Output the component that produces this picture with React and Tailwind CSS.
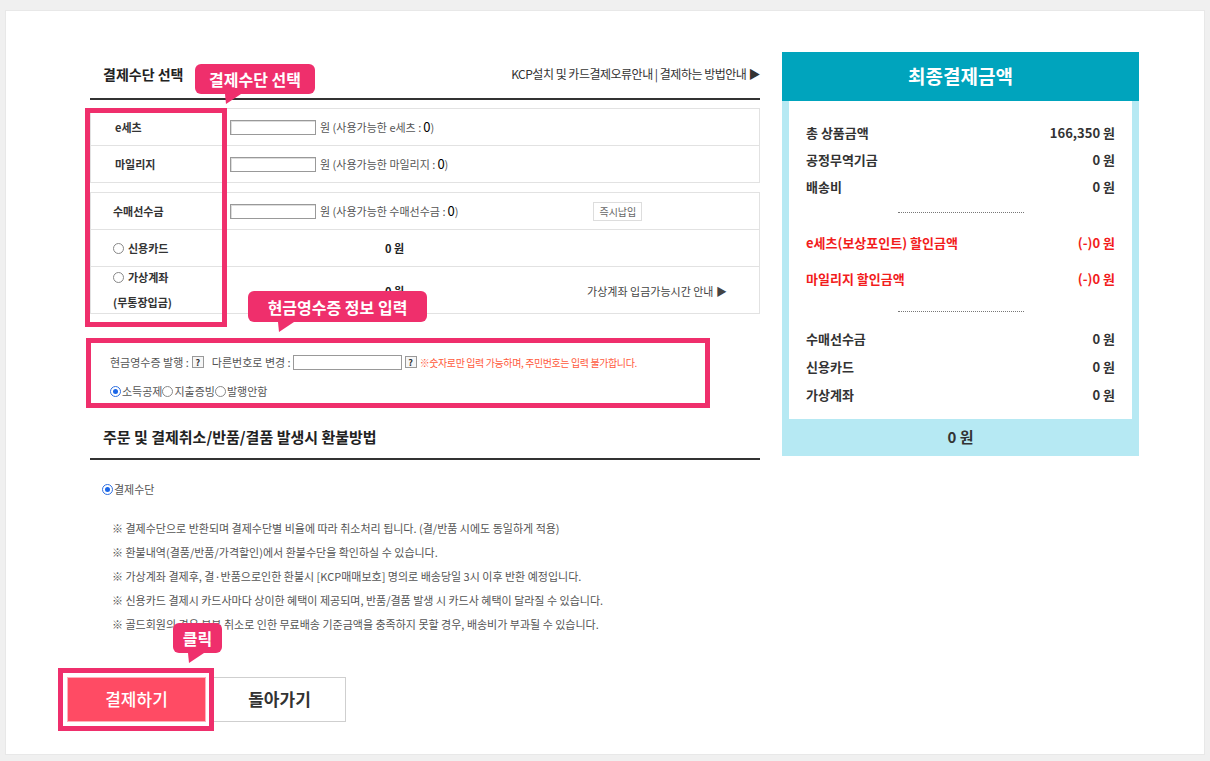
import React from 'react';

const PINK = 'bg-[#ef2f6c]';

const Callout = ({ text, className, tailLeft }) => (
  <div className={`absolute ${PINK} rounded-[6px] flex items-center justify-center text-white font-bold text-[16px] leading-none ${className}`}>
    {text}
    <svg className="absolute top-full" style={{ left: tailLeft }} width="16" height="10" viewBox="0 0 16 10">
      <polygon points="0,0 16,0 1,10" fill="#ef2f6c" />
    </svg>
  </div>
);

const Radio = ({ checked }) => (
  <span className={`inline-block w-[11px] h-[11px] rounded-full border ${checked ? 'border-[#2f6fe0] bg-white p-[2px]' : 'border-[#888] bg-white'} mr-[1px] align-middle`}>
    {checked && <span className="block w-full h-full rounded-full bg-[#1a66e8]" />}
  </span>
);

const Help = () => (
  <span className="inline-flex items-center justify-center w-[12px] h-[12px] border border-[#999] bg-[#f6f6f6] text-[9px] font-bold text-[#333] leading-none">?</span>
);

const PointRow = ({ label, note }) => (
  <div className="h-[37px] flex items-center border-b border-[#e2e2e2]">
    <div className="w-[139px] pl-[24px] text-[11px] font-bold text-[#333]">{label}</div>
    <div className="w-[86px] h-[15px] border border-[#999] bg-white shadow-[inset_1px_1px_0_#ddd]" />
    <div className="ml-[4px] text-[11px] text-[#555] flex items-center">
      원 (사용가능한 {note} : <span className="text-[13px] text-black ml-[2px]">0</span>)
    </div>
  </div>
);

const SumRow = ({ label, value, red, h }) => (
  <div className={`flex items-center justify-between ${h} text-[13px] font-semibold ${red ? 'text-[#f21c1c]' : 'text-[#333]'}`}>
    <span>{label}</span>
    <span>{value}</span>
  </div>
);

const notes = [
  '※ 결제수단으로 반환되며 결제수단별 비율에 따라 취소처리 됩니다. (결/반품 시에도 동일하게 적용)',
  '※ 환불내역(결품/반품/가격할인)에서 환불수단을 확인하실 수 있습니다.',
  '※ 가상계좌 결제후, 결·반품으로인한 환불시 [KCP매매보호] 명의로 배송당일 3시 이후 반환 예정입니다.',
  '※ 신용카드 결제시 카드사마다 상이한 혜택이 제공되며, 반품/결품 발생 시 카드사 혜택이 달라질 수 있습니다.',
  '※ 골드회원의 경우 부분 취소로 인한 무료배송 기준금액을 충족하지 못할 경우, 배송비가 부과될 수 있습니다.',
];

export default function App() {
  return (
    <div className="min-h-screen bg-[#f0f0f0] px-[5px] pt-[10px] pb-[6px] font-['Noto_Sans_CJK_KR','Noto_Sans',sans-serif]">
      <div className="bg-white border border-[#e8e8e8] h-[745px] flex pl-[84px] pt-[41px] gap-[22px]">
        {/* Left column */}
        <div className="relative w-[670px]">
          <div className="h-[48px] flex items-center justify-between border-b-2 border-[#333] pb-[2px]">
            <h2 className="pl-[13px] text-[14px] font-bold text-[#222]">결제수단 선택</h2>
            <span className="text-[12px] text-[#333] tracking-[-0.5px]">KCP설치 및 카드결제오류안내 | 결제하는 방법안내 ▶</span>
          </div>

          <div className="mt-[8px] border border-[#e2e2e2] border-b-0">
            <PointRow label="e세츠" note="e세츠" />
            <PointRow label="마일리지" note="마일리지" />
          </div>

          <div className="mt-[9px] border border-[#e2e2e2] border-b-0">
            <div className="h-[37px] flex items-center border-b border-[#e2e2e2]">
              <div className="w-[139px] pl-[22px] text-[11px] font-bold text-[#333]">수매선수금</div>
              <div className="w-[86px] h-[15px] border border-[#999] bg-white shadow-[inset_1px_1px_0_#ddd]" />
              <div className="ml-[4px] text-[11px] text-[#555] flex items-center">
                원 (사용가능한 수매선수금 : <span className="text-[13px] text-black ml-[2px]">0</span>)
              </div>
              <button className="ml-[135px] h-[19px] px-[5px] border border-[#ddd] bg-white text-[10px] text-[#666]">즉시납입</button>
            </div>
            <div className="h-[37px] flex items-center border-b border-[#e2e2e2]">
              <div className="w-[294px] pl-[22px] text-[11px] font-bold text-[#333] flex items-center gap-[3px]">
                <Radio /> 신용카드
              </div>
              <span className="text-[11px] font-bold text-[#222]">0 원</span>
            </div>
            <div className="h-[47px] flex items-center border-b border-[#e2e2e2]">
              <div className="w-[294px] pl-[22px] text-[11px] font-bold text-[#333] leading-[25px]">
                <div className="flex items-center gap-[3px]"><Radio /> 가상계좌</div>
                <div>(무통장입금)</div>
              </div>
              <span className="text-[11px] font-bold text-[#222] pt-[2px]">0 원</span>
              <span className="ml-[183px] text-[11px] text-[#444] pt-[2px]">가상계좌 입금가능시간 안내 ▶</span>
            </div>
          </div>

          <div className="mt-[24px] h-[70px] pl-[20px] pt-[16px] text-[11px] text-[#555]">
            <div className="flex items-center h-[16px] gap-[3px]">
              <span>현금영수증 발행 :</span>
              <Help />
              <span className="ml-[5px]">다른번호로 변경 :</span>
              <span className="w-[109px] h-[15px] border border-[#999] bg-white -ml-[1px]" />
              <Help />
              <span className="text-[10px] text-[#ff5a3c] tracking-[-0.4px]">※숫자로만 입력 가능하며, 주민번호는 입력 불가합니다.</span>
            </div>
            <div className="flex items-center h-[16px] mt-[13px]">
              <Radio checked />소득공제<Radio />지출증빙<Radio />발행안함
            </div>
          </div>

          <div className="mt-[13px] h-[39px] flex items-center pb-[4px] border-b-2 border-[#333]">
            <h2 className="pl-[13px] text-[15px] font-bold text-[#222]">주문 및 결제취소/반품/결품 발생시 환불방법</h2>
          </div>

          <div className="mt-[21px] pl-[12px] flex items-center text-[11px] text-[#555]">
            <Radio checked />결제수단
          </div>

          <ul className="mt-[19px] pl-[22px] text-[11px] text-[#555]">
            {notes.map((n) => (
              <li key={n} className="h-[24px] flex items-center">{n}</li>
            ))}
          </ul>

          <div className="mt-[40px] flex gap-[7px] ml-[-23px]">
            <button className="w-[139px] h-[45px] bg-[#ff4b64] border border-[#ffb0bc] text-white text-[17px] font-medium">결제하기</button>
            <button className="w-[133px] h-[45px] bg-white border border-[#cfcfcf] text-[#333] text-[17px] font-semibold">돌아가기</button>
          </div>

          {/* Annotations */}
          <div className="absolute left-[-5px] top-[56px] w-[142px] h-[219px] border-[5px] border-[#ef2f6c] pointer-events-none" />
          <div className="absolute left-[-4px] top-[286px] w-[624px] h-[70px] border-[5px] border-[#ef2f6c] pointer-events-none" />
          <div className="absolute left-[-32px] top-[616px] w-[156px] h-[63px] border-[5px] border-[#ef2f6c] pointer-events-none" />
          <Callout text="결제수단 선택" className="left-[105px] top-[12px] w-[120px] h-[30px]" tailLeft={30} />
          <Callout text="현금영수증 정보 입력" className="left-[158px] top-[239px] w-[179px] h-[31px]" tailLeft={30} />
          <Callout text="클릭" className="left-[83px] top-[571px] w-[49px] h-[30px]" tailLeft={15} />
        </div>

        {/* Right column */}
        <div className="w-[357px] self-start">
          <div className="h-[49px] bg-[#00a4bd] flex items-center justify-center text-white text-[19px] font-bold">최종결제금액</div>
          <div className="h-[318px] bg-white border-x-[7px] border-[#b6e9f3] px-[17px] pt-[18px]">
            <SumRow label="총 상품금액" value="166,350 원" h="h-[27px]" />
            <SumRow label="공정무역기금" value="0 원" h="h-[27px]" />
            <SumRow label="배송비" value="0 원" h="h-[27px]" />
            <div className="mt-[12px] mx-auto w-[126px] border-t border-dotted border-[#777]" />
            <div className="mt-[12px]" />
            <SumRow label="e세츠(보상포인트) 할인금액" value="(-)0 원" red h="h-[36px]" />
            <SumRow label="마일리지 할인금액" value="(-)0 원" red h="h-[36px]" />
            <div className="mt-[14px] mx-auto w-[126px] border-t border-dotted border-[#777]" />
            <div className="mt-[13px]" />
            <SumRow label="수매선수금" value="0 원" h="h-[28px]" />
            <SumRow label="신용카드" value="0 원" h="h-[28px]" />
            <SumRow label="가상계좌" value="0 원" h="h-[28px]" />
          </div>
          <div className="h-[37px] bg-[#b6e9f3] flex items-center justify-center text-[15px] font-bold text-[#333]">0 원</div>
        </div>
      </div>
    </div>
  );
}
